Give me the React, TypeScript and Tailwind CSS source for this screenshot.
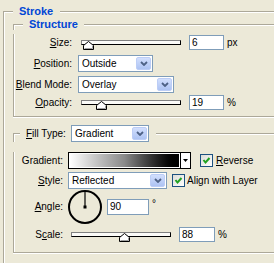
const etch = 'border-[#aca899]';

const U = ({ c }: { c: string }) => <span className="underline underline-offset-1">{c}</span>;

function Corner({ top, w }: { top: string; w: string }) {
  return <div className={`${top} ${w} border-l border-t ${etch} shadow-[inset_1px_1px_0_#fff]`} />;
}

function Line({ className }: { className: string }) {
  return <div className={`h-[2px] flex-1 border-t ${etch} bg-white ${className}`} />;
}

function Chevron() {
  return (
    <div className="flex h-[13px] w-[15px] items-center justify-center rounded-[2px] border border-[#bccdf6] bg-linear-to-b from-[#d2dffd] to-[#adc3f3]">
      <svg width="8" height="5" viewBox="0 0 8 5">
        <path d="M1 1 L4 4 L7 1" stroke="#4d6185" strokeWidth="1.8" fill="none" />
      </svg>
    </div>
  );
}

function Select({ value, className }: { value: string; className: string }) {
  return (
    <div className={`flex h-[17px] items-center border border-[#7f9db9] bg-white pl-[3px] pr-px ${className}`}>
      <span className="flex-1">{value}</span>
      <Chevron />
    </div>
  );
}

function Field({ value, className }: { value: string; className: string }) {
  return (
    <div className={`flex items-center border border-[#7f9db9] bg-white pl-[2px] ${className}`}>{value}</div>
  );
}

function Slider({ pos, className = '' }: { pos: number; className?: string }) {
  return (
    <div className={`relative h-[17px] w-[100px] ${className}`}>
      <div className="mt-[6px] h-[5px] border border-black border-l-[#808080] border-t-[#808080] bg-[#fbfbf8]" />
      <svg className="absolute top-[7px]" style={{ left: pos }} width="11" height="9" viewBox="0 0 11 9">
        <path d="M5.5 0.5 L10.5 4.5 V8.5 H0.5 V4.5 Z" fill="#fff" stroke="#000" />
        <path d="M9.5 5 V7.5 H1.5" stroke="#a0a0a0" fill="none" />
      </svg>
    </div>
  );
}

function Check() {
  return (
    <div className="flex h-[13px] w-[13px] items-center justify-center border border-[#1c5180] bg-linear-to-br from-[#dcdcd7] to-white">
      <svg width="9" height="9" viewBox="0 0 9 9">
        <path d="M1.5 4 L3.5 6.5 L7.5 2" stroke="#21a121" strokeWidth="2" fill="none" />
      </svg>
    </div>
  );
}

export default function App() {
  return (
    <div className="h-[263px] w-[274px] overflow-hidden bg-[#ece9d8] pl-[3px] pt-[5px] font-['Liberation_Sans',Arial,sans-serif] text-[10px] leading-none text-black">
      {/* Stroke group title */}
      <div className="flex h-[13px]">
        <Corner top="mt-[6px]" w="w-[10px]" />
        <span className="ml-[6px] text-[11px] font-bold leading-[13px] text-[#0046d5]">Stroke</span>
        <Line className="ml-[7px] mt-[6px]" />
      </div>
      <div className={`border-l ${etch} pb-[30px] pl-[9px] shadow-[inset_1px_0_0_#fff]`}>
        {/* Structure */}
        <div className="flex h-[12px]">
          <Corner top="mt-[6px]" w="w-[10px]" />
          <span className="ml-[6px] text-[11px] font-bold leading-[12px] text-[#0046d5]">Structure</span>
          <Line className="ml-[6px] mt-[6px]" />
        </div>
        <div className={`border-b border-l ${etch} pb-[5px] shadow-[inset_1px_0_0_#fff,0_1px_0_#fff]`}>
          <div className="mt-[4px] flex h-[17px] items-center">
            <span className="w-[58px] text-right"><U c="S" />ize:</span>
            <Slider pos={2} className="ml-[9px]" />
            <Field value="6" className="ml-[8px] h-[15px] w-[35px]" />
            <span className="ml-[3px]">px</span>
          </div>
          <div className="mt-[4px] flex h-[17px] items-center">
            <span className="w-[58px] text-right"><U c="P" />osition:</span>
            <Select value="Outside" className="ml-[6px] w-[75px]" />
          </div>
          <div className="mt-[4px] flex h-[17px] items-center">
            <span className="w-[58px] text-right"><U c="B" />lend Mode:</span>
            <Select value="Overlay" className="ml-[6px] w-[96px]" />
          </div>
          <div className="mt-px flex h-[17px] items-center">
            <span className="w-[58px] text-right"><U c="O" />pacity:</span>
            <Slider pos={15} className="ml-[9px]" />
            <Field value="19" className="ml-[8px] h-[15px] w-[35px]" />
            <span className="ml-[3px]">%</span>
          </div>
        </div>

        {/* Fill */}
        <div className="mt-[8px] flex h-[17px] items-center">
          <Corner top="mt-[8px] self-stretch" w="w-[7px]" />
          <span className="ml-[6px] w-[45px]"><U c="F" />ill Type:</span>
          <Select value="Gradient" className="w-[78px]" />
          <Line className="ml-[7px] self-start mt-[8px]" />
        </div>
        <div className={`border-b border-l ${etch} pb-[9px] shadow-[inset_1px_0_0_#fff,0_1px_0_#fff]`}>
          <div className="mt-[10px] flex h-[17px] items-center">
            <span className="w-[49px] text-right">Gradient:</span>
            <div className="ml-[5px] flex h-[17px] w-[123px] border border-black bg-white">
              <div className="m-px flex-1 bg-linear-to-r from-white via-[#8a8a8a] to-black" />
              <div className="flex w-[10px] items-center justify-center border-l border-black">
                <svg width="5" height="3" viewBox="0 0 5 3">
                  <path d="M0 0 H5 L2.5 3 Z" fill="#000" />
                </svg>
              </div>
            </div>
            <div className="ml-[9px]"><Check /></div>
            <span className="ml-[3px]"><U c="R" />everse</span>
          </div>
          <div className="mt-[3px] flex h-[17px] items-center">
            <span className="w-[49px] text-right"><U c="S" />tyle:</span>
            <Select value="Reflected" className="ml-[5px] w-[99px]" />
            <div className="ml-[5px]"><Check /></div>
            <span className="ml-[2px]">Align with Layer</span>
          </div>
          <div className="mt-px flex h-[34px] items-center">
            <span className="w-[49px] text-right"><U c="A" />ngle:</span>
            <svg className="ml-[5px]" width="34" height="34" viewBox="0 0 34 34">
              <circle cx="17" cy="17" r="16" fill="none" stroke="#000" strokeWidth="2" />
              <line x1="17" y1="17" x2="17" y2="2" stroke="#000" strokeWidth="1.2" />
              <rect x="15.5" y="15.5" width="3" height="3" fill="#000" />
            </svg>
            <Field value="90" className="ml-[5px] h-[16px] w-[42px]" />
            <span className="-mt-[6px] ml-[3px] text-[10px] text-black">°</span>
          </div>
          <div className="mt-[2px] flex h-[17px] items-center">
            <span className="w-[49px] text-right">S<U c="c" />ale:</span>
            <Slider pos={48} className="ml-[8px]" />
            <Field value="88" className="ml-[8px] h-[15px] w-[36px]" />
            <span className="ml-[3px]">%</span>
          </div>
        </div>
      </div>
    </div>
  );
}
